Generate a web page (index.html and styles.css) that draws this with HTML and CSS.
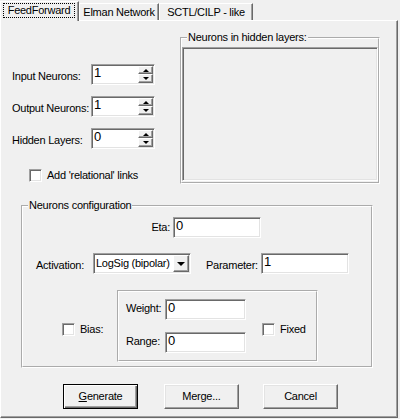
FILE: index.html
```html
<!DOCTYPE html>
<html>
<head>
<meta charset="utf-8">
<link rel="stylesheet" href="styles.css">
</head>
<body>
<div class="tabs">
  <div class="tab sel"><span class="focus">FeedForward</span></div>
  <div class="tab t2">Elman Network</div>
  <div class="tab t3">SCTL/CILP - like</div>
</div>
<div class="panel">
  <div class="top">
    <div class="left">
      <div class="row">
        <span class="lbl">Input Neurons:</span>
        <div class="edit spin"><span class="val">1</span><div class="spinbtns"><span class="sb"><i class="up"></i></span><span class="sb"><i class="dn"></i></span></div></div>
      </div>
      <div class="row">
        <span class="lbl">Output Neurons:</span>
        <div class="edit spin"><span class="val">1</span><div class="spinbtns"><span class="sb"><i class="up"></i></span><span class="sb"><i class="dn"></i></span></div></div>
      </div>
      <div class="row">
        <span class="lbl">Hidden Layers:</span>
        <div class="edit spin"><span class="val">0</span><div class="spinbtns"><span class="sb"><i class="up"></i></span><span class="sb"><i class="dn"></i></span></div></div>
      </div>
      <div class="check-row"><span class="cb"></span><span class="cbl">Add 'relational' links</span></div>
    </div>
    <fieldset class="group hidden-group">
      <legend>Neurons in hidden layers:</legend>
      <div class="listbox"></div>
    </fieldset>
  </div>
  <fieldset class="group config">
    <legend>Neurons configuration</legend>
    <div class="eta-row"><span class="eta-lbl">Eta:</span><div class="edit w88"><span class="val">0</span></div></div>
    <div class="act-row">
      <span class="act-lbl">Activation:</span>
      <div class="edit combo"><span class="ctext">LogSig (bipolar)</span><span class="dropbtn"><i class="dn big"></i></span></div>
      <span class="par-lbl">Parameter:</span>
      <div class="edit w88"><span class="val">1</span></div>
    </div>
    <div class="bias-row">
      <div class="bias-check"><span class="cb"></span><span class="cbl">Bias:</span></div>
      <div class="box">
        <div class="bcol">
          <div class="brow"><span class="blbl">Weight:</span><div class="edit w81"><span class="val">0</span></div></div>
          <div class="brow"><span class="blbl">Range:</span><div class="edit w81"><span class="val">0</span></div></div>
        </div>
        <div class="fixed-check"><span class="cb"></span><span class="cbl">Fixed</span></div>
      </div>
    </div>
  </fieldset>
  <div class="buttons">
    <div class="btn default"><u>G</u>enerate</div>
    <div class="btn merge">Merge...</div>
    <div class="btn cancel">Cancel</div>
  </div>
</div>
</body>
</html>
```
FILE: styles.css
```css
* { box-sizing: border-box; }
html, body { margin: 0; padding: 0; }
body {
  width: 400px;
  height: 419px;
  overflow: hidden;
  background: #f0f0f0;
  font-family: "Liberation Sans", Arial, sans-serif;
  font-size: 11px;
  line-height: 13px;
  letter-spacing: -0.25px;
  color: #000;
}

/* tabs */
.tabs { display: flex; align-items: flex-end; height: 20px; }
.tab {
  height: 17px;
  border-top: 1px solid #fff;
  border-left: 1px solid #fff;
  border-right: 1px solid #696969;
  box-shadow: inset -1px 0 0 #a0a0a0;
  display: flex;
  align-items: center;
  justify-content: center;
  background: #f0f0f0;
}
.tab.sel {
  width: 79px;
  height: 20px;
  margin-bottom: -1px;
  position: relative;
  z-index: 1;
  align-items: flex-start;
  justify-content: flex-start;
  padding-top: 1px;
}
.focus {
  margin-left: 2px;
  width: 72px;
  height: 15px;
  border: 1px dotted #000;
  display: flex;
  align-items: center;
  justify-content: center;
}
.t2 { width: 80px; }
.t3 { width: 94px; }

/* panel */
.panel {
  width: 398px;
  height: 398px;
  border-top: 1px solid #fff;
  border-left: 1px solid #fff;
  border-right: 1px solid #696969;
  border-bottom: 1px solid #696969;
  box-shadow: inset -1px -1px 0 #a0a0a0;
}

.top { display: flex; align-items: flex-start; margin-top: 10px; }
.left { width: 179px; padding-top: 33px; padding-left: 11px; }
.row { display: flex; align-items: flex-start; height: 21px; }
.row + .row { margin-top: 11px; }
.lbl { width: 79px; margin-top: 6px; white-space: nowrap; }

/* sunken edit */
.edit {
  height: 21px;
  background: #fff;
  border: 1px solid;
  border-color: #a0a0a0 #fff #fff #a0a0a0;
  box-shadow: inset 1px 1px 0 #696969, inset -1px -1px 0 #e3e3e3;
  display: flex;
  align-items: flex-start;
}
.val {
  font-size: 13px;
  letter-spacing: -0.3px;
  padding: 1px 0 0 2px;
  line-height: 14px;
}
.spin { width: 64px; }
.spin .val { flex: 1; }
.spinbtns {
  width: 15px;
  height: 17px;
  margin: 1px 1px 0 0;
  display: flex;
  flex-direction: column;
}
.sb {
  flex: 1;
  background: #f0f0f0;
  border: 1px solid;
  border-color: #fff #696969 #696969 #fff;
  box-shadow: inset -1px -1px 0 #a0a0a0;
  display: flex;
  align-items: center;
  justify-content: center;
}
.sb:first-child { height: 8px; flex: none; }
i.up {
  width: 0; height: 0;
  border-left: 3px solid transparent;
  border-right: 3px solid transparent;
  border-bottom: 3px solid #000;
}
i.dn {
  width: 0; height: 0;
  border-left: 3px solid transparent;
  border-right: 3px solid transparent;
  border-top: 3px solid #000;
}
i.dn.big {
  border-left-width: 4px;
  border-right-width: 4px;
  border-top-width: 4px;
}

/* checkbox */
.check-row { display: flex; align-items: flex-start; margin-top: 20px; margin-left: 17px; }
.cb {
  width: 13px;
  height: 13px;
  flex: none;
  background: #fff;
  border: 1px solid;
  border-color: #a0a0a0 #fff #fff #a0a0a0;
  box-shadow: inset 1px 1px 0 #696969, inset -1px -1px 0 #e3e3e3;
}
.cbl { margin-left: 5px; white-space: nowrap; }

/* group boxes */
.group {
  margin: 0;
  min-width: 0;
  border: 2px groove #fff;
}
.group legend {
  padding: 0 1px;
  margin-left: 5px;
  line-height: 13px;
}
.hidden-group { width: 200px; padding: 3px 0 1px 0; }
.listbox {
  width: 196px;
  height: 134px;
  background: #f0f0f0;
  border: 1px solid;
  border-color: #a0a0a0 #fff #fff #a0a0a0;
  box-shadow: inset 1px 1px 0 #696969, inset -1px -1px 0 #e3e3e3;
}

.config { width: 352px; margin: 15px 0 0 20px; padding: 5px 0 4px 0; }
.eta-row { display: flex; align-items: flex-start; padding-left: 117px; }
.eta-lbl { width: 30px; text-align: right; margin: 4px 3px 0 0; }
.w88 { width: 88px; }
.w81 { width: 81px; }

.act-row { display: flex; align-items: flex-start; padding-left: 13px; margin-top: 15px; }
.act-lbl { width: 57px; margin-top: 6px; white-space: nowrap; }
.par-lbl { width: 55px; margin: 6px 0 0 15px; white-space: nowrap; }
.combo { width: 98px; justify-content: space-between; }
.ctext { padding: 3px 0 0 2px; white-space: nowrap; }
.dropbtn {
  width: 16px;
  height: 17px;
  margin: 1px 1px 0 0;
  background: #f0f0f0;
  border: 1px solid;
  border-color: #fff #696969 #696969 #fff;
  box-shadow: inset -1px -1px 0 #a0a0a0;
  display: flex;
  align-items: center;
  justify-content: center;
}

.bias-row { display: flex; align-items: flex-start; margin-top: 16px; padding-left: 39px; }
.bias-check { width: 55px; display: flex; align-items: flex-start; margin-top: 33px; }
.box {
  width: 201px;
  height: 72px;
  border: 2px groove #fff;
  padding: 7px 0 0 7px;
  display: flex;
  align-items: flex-start;
}
.bcol { width: 120px; }
.brow { display: flex; align-items: flex-start; }
.brow + .brow { margin-top: 12px; }
.blbl { width: 39px; margin-top: 3px; }
.fixed-check { display: flex; align-items: flex-start; margin: 24px 0 0 16px; }

/* buttons */
.buttons { display: flex; margin-top: 16px; padding-left: 62px; }
.btn {
  width: 75px;
  height: 25px;
  border: 1px solid;
  border-color: #fff #696969 #696969 #fff;
  box-shadow: inset -1px -1px 0 #a0a0a0, inset 1px 1px 0 #e3e3e3;
  display: flex;
  align-items: center;
  justify-content: center;
}
.btn.default {
  border-color: #000;
  box-shadow: inset 1px 1px 0 #fff, inset -1px -1px 0 #696969, inset -2px -2px 0 #a0a0a0;
}
.merge { margin-left: 26px; }
.cancel { margin-left: 24px; }
```
